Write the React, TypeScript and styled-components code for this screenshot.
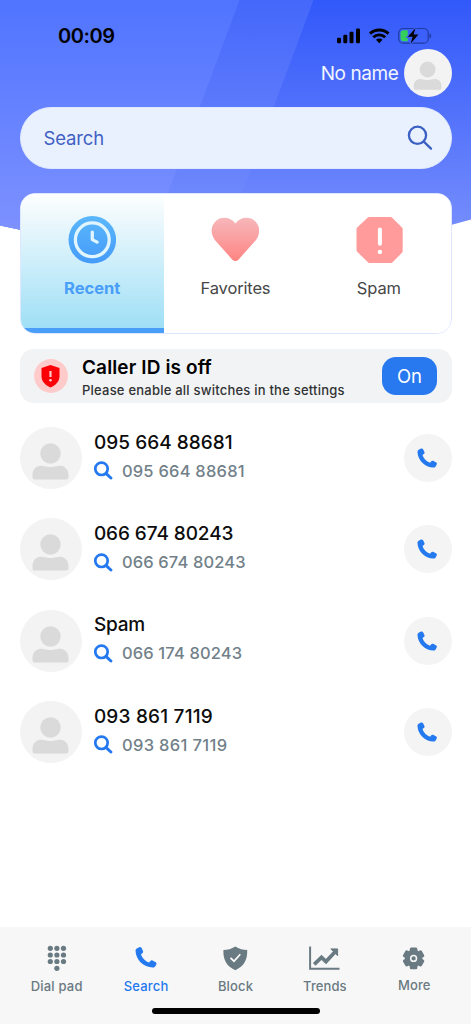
import React from 'react';
import styled, { createGlobalStyle } from 'styled-components';

const GlobalStyle = createGlobalStyle`
  * { box-sizing: border-box; }
  body { margin: 0; background: #fff; font-family: Inter, "Liberation Sans", sans-serif; }
  button { font: inherit; border: 0; padding: 0; background: none; }
  svg { display: block; flex: none; }
`;

const Screen = styled.div`
  position: relative;
  width: 471px;
  height: 1024px;
  overflow: hidden;
  display: flex;
  flex-direction: column;
`;

const Backdrop = styled.svg`
  position: absolute;
  top: 0;
  left: 0;
  z-index: -1;
`;

const Text = styled.span<{ $size: number; $color: string; $weight?: number; $track?: number }>`
  font-size: ${p => p.$size}px;
  line-height: 24px;
  font-weight: ${p => p.$weight ?? 400};
  letter-spacing: ${p => p.$track ?? 0}px;
  color: ${p => p.$color};
  white-space: nowrap;
`;

const StatusBar = styled.div`
  height: 48px;
  padding: 24px 39px 0 58px;
  display: flex;
  justify-content: space-between;
  align-items: flex-start;
`;

const StatusIcons = styled.div`
  display: flex;
  align-items: center;
  height: 23px;
`;

const Profile = styled.div`
  height: 49px;
  padding-right: 19.5px;
  display: flex;
  align-items: center;
  justify-content: flex-end;
  gap: 5px;
  & > span { padding-top: 2px; }
`;

const AvatarCircle = styled.div<{ $size: number }>`
  width: ${p => p.$size}px;
  height: ${p => p.$size}px;
  border-radius: 50%;
  background: #f3f3f3;
  flex: none;
`;

const SearchField = styled.div`
  margin: 9.5px 19.5px 0;
  height: 62px;
  border-radius: 31px;
  padding: 0 18px 0 23px;
  border: 1px solid #dfe8ff;
  background: #eaf1fe;
  display: flex;
  align-items: center;
  justify-content: space-between;
`;

const Tabs = styled.div`
  margin: 24px 19.5px 0;
  height: 141.5px;
  border-radius: 15px;
  border: 1px solid #dfe6ff;
  background: #fff;
  overflow: hidden;
  display: grid;
  grid-template-columns: repeat(3, 1fr);
`;

const Tab = styled.button<{ $active?: boolean }>`
  display: flex;
  flex-direction: column;
  align-items: center;
  gap: 11px;
  padding-top: 22px;
  background: ${p => (p.$active ? 'linear-gradient(#fefefe, #9fdff6)' : '#fff')};
  border-bottom: ${p => (p.$active ? '5px solid #489ef9' : '0')};
`;

const Notice = styled.div`
  margin: 15px 19.5px 0;
  height: 54px;
  border-radius: 14px;
  background: #f2f3f5;
  display: flex;
  align-items: center;
  padding: 0 14.5px 0 14px;
`;

const NoticeText = styled.div`
  display: flex;
  flex-direction: column;
  padding: 6px 0 0 14.5px;
  flex: 1;
  & > span { line-height: 22px; }
`;

const OnButton = styled.button`
  width: 55px;
  height: 38px;
  border-radius: 14px;
  background: #2878f0;
`;

const CallList = styled.div`
  padding: 24px 19.5px 0;
  display: flex;
  flex-direction: column;
  gap: 29.3px;
  flex: 1;
`;

const CallRow = styled.div`
  height: 62px;
  display: flex;
  align-items: center;
`;

const CallInfo = styled.div`
  display: flex;
  flex-direction: column;
  gap: 4px;
  padding: 0 0 2.5px 12.4px;
  flex: 1;
`;

const NumberLine = styled.div`
  display: flex;
  align-items: center;
  gap: 9px;
`;

const CallButton = styled.button`
  width: 48px;
  height: 48px;
  border-radius: 50%;
  background: #f4f4f4;
  display: flex;
  align-items: center;
  justify-content: center;
  padding-right: 2px;
`;

const BottomNav = styled.nav`
  height: 97px;
  background: #f7f7f7;
  padding: 15px 12px 0;
  display: flex;
  flex-direction: column;
`;

const NavItems = styled.div`
  display: grid;
  grid-template-columns: repeat(5, 1fr);
  height: 66px;
`;

const NavItem = styled.button<{ $raised?: boolean }>`
  display: flex;
  flex-direction: column;
  align-items: center;
  justify-content: flex-start;
  & > svg { margin-bottom: ${p => (p.$raised ? -1 : 0)}px; }
`;

const HomeIndicator = styled.div`
  width: 168px;
  height: 6px;
  border-radius: 3px;
  background: #000;
  align-self: center;
`;

const Avatar = ({ size }: { size: number }) => (
  <AvatarCircle $size={size}>
    <svg width={size} height={size} viewBox="0 0 62 62">
      <circle cx="30.500" cy="26.500" r="10.200" fill="#dadada" />
      <path d="M12.500 50.500v-2.500C12.500 43 15.500 39 20.500 38.700c4 0 5 1.200 10 1.200s6-1.200 10-1.200c5 .3 8 4.300 8 9.300v2.500a2 2 0 0 1-2 2h-32a2 2 0 0 1-2-2z" fill="#dadada" />
    </svg>
  </AvatarCircle>
);

const PHONE = 'M2.500 1.800 4.800.7C5.800.3 6.800.6 7.300 1.600L8.900 4.900c.4 1 .1 1.800-.7 2.400L6.600 8.500C7.800 12.500 11.300 16.300 15.700 17.700L17.100 16c.6-.8 1.500-1 2.300-.6l3.700 1.900c.8.5 1 1.400.6 2.200l-1 2c-.6 1.200-1.600 1.800-3 1.800C9.500 23.200.8 14.500.6 4.700.6 3.300 1.200 2.400 2.500 1.800z';

const PhoneIcon = () => (
  <svg width="20" height="20" viewBox="0 0 24 24"><path d={PHONE} fill="#2479ee" /></svg>
);

const ContactSearchIcon = () => (
  <svg width="19" height="19" viewBox="0 0 19 19" fill="none" stroke="#2479f0">
    <circle cx="7.500" cy="7.800" r="6.200" strokeWidth="2.700" />
    <path d="m12.200 12.600 4.700 4.400" strokeWidth="3" strokeLinecap="round" />
  </svg>
);

const StatusGlyphs = () => (
  <svg width="96" height="20" viewBox="0 0 96 20">
    <rect x="1" y="11.800" width="4" height="5.500" rx="1.200" />
    <rect x="7.300" y="8.800" width="4" height="8.500" rx="1.200" />
    <rect x="13.500" y="5.800" width="4" height="11.500" rx="1.200" />
    <rect x="20" y="2.500" width="4" height="14.800" rx="1.200" />
    <g fill="none" stroke="#000" strokeWidth="2.900">
      <path d="M34 7.600c5.200-4.900 13.300-4.900 18.500 0" />
      <path d="M37.300 11.300c3.400-3.300 8.500-3.300 11.900 0" />
    </g>
    <path d="M40 13.800c1.800-1.600 4.700-1.600 6.500 0L43.200 17.300z" />
    <rect x="62.700" y="2.500" width="29.500" height="14.700" rx="4.500" fill="none" stroke="#203b9f" strokeWidth="1.200" />
    <path d="M93.500 7.300v5.200c2.200-1 2.200-4.200 0-5.200z" fill="#203b9f" />
    <path d="M67.500 4.300h4.300v11h-4.300a3 3 0 0 1-3-3V7.300a3 3 0 0 1 3-3z" fill="#34ce5d" />
    <path d="M79.600 1.900 71.800 10.800h4.800l-2 7 7.800-9.300h-4.800z" stroke="#3c60f9" strokeWidth="2.200" paintOrder="stroke" />
  </svg>
);

const ClockIcon = () => (
  <svg width="48" height="49" viewBox="0 0 48 49">
    <defs>
      <linearGradient id="clock" x2="0" y2="1"><stop stopColor="#5bb7fb" /><stop offset="1" stopColor="#449bf9" /></linearGradient>
    </defs>
    <circle cx="24.300" cy="23.800" r="23.800" fill="url(#clock)" />
    <circle cx="24.300" cy="23.800" r="16.900" fill="none" stroke="#e1f5fe" strokeWidth="3.300" />
    <path d="M24.300 16.100v7.500l4.900 2.500" fill="none" stroke="#e1f5fe" strokeWidth="3.300" strokeLinecap="round" strokeLinejoin="round" />
  </svg>
);

const HeartIcon = () => (
  <svg width="48" height="49" viewBox="0 0 48 49">
    <defs>
      <linearGradient id="heart" x2="0" y2="1"><stop stopColor="#f7b7ba" /><stop offset="1" stopColor="#fe8583" /></linearGradient>
    </defs>
    <path transform="translate(.4 -.6)" d="M24 8.200C19.500 1.500 10 .5 4.500 5.500-1 10.500-1 18.500 3.400 24.500L20.300 43.500c2.400 2.700 5 2.700 7.400 0L44.600 24.500C49 18.500 49 10.500 43.500 5.500 38 .5 28.500 1.500 24 8.200z" fill="url(#heart)" />
  </svg>
);

const SpamIcon = () => (
  <svg width="48" height="49" viewBox="0 0 48 49">
    <path transform="translate(1.200 -.5) scale(.985)" d="M13.200 1.500h21.600c.7 0 1.200.2 1.700.7l10 10c.5.500.7 1 .7 1.700v22.200c0 .7-.2 1.200-.7 1.700l-9.800 9.800c-.5.500-1 .7-1.700.7H12.700L1 36.800c-.5-.5-.7-1-.7-1.700V13.900c0-.7.2-1.200.7-1.700l10.500-10c.5-.5 1-.7 1.700-.7z" fill="#ff9b9a" />
    <path d="M24.900 13.500v14.300" stroke="#fff" strokeWidth="4" strokeLinecap="round" />
    <circle cx="24.900" cy="35.900" r="2.200" fill="#fff" />
  </svg>
);

const NoticeIcon = () => (
  <svg width="34" height="34" viewBox="0 0 34 34">
    <circle cx="17" cy="17" r="16.900" fill="#ffcaca" />
    <path d="M16.500 5.900 25.500 9v8.300c0 5.200-3.600 8.700-9 11.200-5.400-2.500-9-6-9-11.200V9z" fill="#fb0007" />
    <path d="M16.500 12v6" stroke="#ffcaca" strokeWidth="2.200" />
    <circle cx="16.500" cy="21.300" r="1.300" fill="#ffcaca" />
  </svg>
);

const GREY = '#6a7a82';

const DialIcon = () => (
  <svg width="32" height="32" viewBox="0 0 32 32" fill={GREY}>
    {[6.300, 13, 19.500].map(y => [9.300, 15.900, 22.500].map(x => <circle key={`${x}-${y}`} cx={x} cy={y} r="2.600" />))}
    <circle cx="15.900" cy="26.300" r="2.600" />
  </svg>
);

const NavPhoneIcon = () => (
  <svg width="32" height="32" viewBox="0 0 32 32">
    <path d={PHONE} transform="translate(5 4.600) scale(.9)" fill="#2479ee" />
  </svg>
);

const ShieldIcon = () => (
  <svg width="32" height="32" viewBox="0 0 32 32">
    <path d="M16.300 4.500c3.800 2.500 7.800 3.400 11.900 3.600C28.600 17.700 25.100 24.500 16.300 28.200 7.500 24.500 4 17.700 4.400 8.100 8.500 7.900 12.500 7 16.300 4.500z" fill={GREY} />
    <path d="m11.500 15.800 3.500 3.400 6.300-7" stroke="#fff" strokeWidth="1.700" fill="none" />
  </svg>
);

const TrendsIcon = () => (
  <svg width="32" height="32" viewBox="0 0 32 32" fill="none" stroke={GREY}>
    <path d="M1.100 4.500v22.200H30.500" strokeWidth="2" />
    <path d="m5.200 22.300 7.300-7 4.500 4.300 8.500-9" strokeWidth="3.700" />
    <path d="M21.800 6.900h6.800v6.800z" fill={GREY} strokeWidth="1" />
  </svg>
);

const GearIcon = () => (
  <svg width="32" height="32" viewBox="0 0 32 32">
    <g fill={GREY} transform="translate(15.600 16.400)">
      {[0, 60, 120].map(a => <rect key={a} x="-3.800" y="-10.800" width="7.600" height="21.600" rx="1.500" transform={`rotate(${a})`} />)}
      <circle r="8.800" />
    </g>
    <circle cx="15.600" cy="16.400" r="2.900" fill="none" stroke="#f7f7f7" strokeWidth="1.500" />
  </svg>
);

const calls = [
  { title: '095 664 88681', number: '095 664 88681', track: 0.05, sub: 0.22 },
  { title: '066 674 80243', number: '066 674 80243', track: -0.08, sub: 0.14 },
  { title: 'Spam', number: '066 174 80243', track: -0.2, sub: 0.14 },
  { title: '093 861 7119', number: '093 861 7119', track: 0.2, sub: 0.35 },
];

export default function App() {
  return (
    <Screen>
      <GlobalStyle />
      <Backdrop width="471" height="260" viewBox="0 0 471 260">
        <defs>
          <linearGradient id="sky" gradientUnits="userSpaceOnUse" x1="0" y1="0" x2="0" y2="230"><stop stopColor="#3158fa" /><stop offset="1" stopColor="#758dfc" /></linearGradient>
          <linearGradient id="mid" gradientUnits="userSpaceOnUse" x1="0" y1="0" x2="0" y2="230"><stop stopColor="#4568fb" /><stop offset="1" stopColor="#758dfc" /></linearGradient>
          <linearGradient id="light" gradientUnits="userSpaceOnUse" x1="0" y1="0" x2="0" y2="230"><stop stopColor="#5074ff" /><stop offset="1" stopColor="#7d91ff" /></linearGradient>
          <clipPath id="edge"><path d="M0 0H471V219.500L451 225Q240 270 19 229.500L0 225.500z" /></clipPath>
        </defs>
        <g clipPath="url(#edge)">
          <path d="M0 0H471V260H0z" fill="url(#sky)" />
          <path d="M0 0H313.500L217 260H0z" fill="url(#mid)" />
          <path d="M0 0H239.500L143 260H0z" fill="url(#light)" />
        </g>
      </Backdrop>

      <StatusBar>
        <Text $size={20} $weight={600} $track={-0.4} $color="#000">00:09</Text>
        <StatusIcons><StatusGlyphs /></StatusIcons>
      </StatusBar>
      <Profile>
        <Text $size={19} $track={-0.4} $color="#f3f6ff">No name</Text>
        <Avatar size={48} />
      </Profile>

      <SearchField>
        <Text $size={18.500} $track={-0.15} $color="#4060c4">Search</Text>
        <svg width="26" height="26" viewBox="0 0 26 26" fill="none" stroke="#3b60c3" strokeWidth="2.300" strokeLinecap="round">
          <circle cx="10.500" cy="10.300" r="8.600" /><path d="m16.800 16.600 7.200 7" />
        </svg>
      </SearchField>

      <Tabs>
        <Tab $active><ClockIcon /><Text $size={16.500} $weight={700} $color="#489ef9">Recent</Text></Tab>
        <Tab><HeartIcon /><Text $size={16.500} $track={-0.15} $color="#474747">Favorites</Text></Tab>
        <Tab><SpamIcon /><Text $size={16.500} $track={-0.15} $color="#474747">Spam</Text></Tab>
      </Tabs>

      <Notice>
        <NoticeIcon />
        <NoticeText>
          <Text $size={19} $weight={600} $track={0.12} $color="#000">Caller ID is off</Text>
          <Text $size={13} $weight={500} $track={0.22} $color="#303234">Please enable all switches in the settings</Text>
        </NoticeText>
        <OnButton><Text $size={18.500} $color="#fff">On</Text></OnButton>
      </Notice>

      <CallList>
        {calls.map(c => (
          <CallRow key={c.title}>
            <Avatar size={62} />
            <CallInfo>
              <Text $size={19} $track={c.track} $weight={500} $color="#0c0c0c">{c.title}</Text>
              <NumberLine>
                <ContactSearchIcon />
                <Text $size={16.500} $track={c.sub} $weight={500} $color="#728189">{c.number}</Text>
              </NumberLine>
            </CallInfo>
            <CallButton><PhoneIcon /></CallButton>
          </CallRow>
        ))}
      </CallList>

      <BottomNav>
        <NavItems>
          <NavItem><DialIcon /><Text $size={13} $track={0.2} $weight={500} $color={GREY}>Dial pad</Text></NavItem>
          <NavItem><NavPhoneIcon /><Text $size={13} $track={0.15} $weight={500} $color="#2479ee">Search</Text></NavItem>
          <NavItem><ShieldIcon /><Text $size={13} $track={0.15} $weight={500} $color={GREY}>Block</Text></NavItem>
          <NavItem><TrendsIcon /><Text $size={13} $track={0.1} $weight={500} $color={GREY}>Trends</Text></NavItem>
          <NavItem $raised><GearIcon /><Text $size={13} $track={0.1} $weight={500} $color={GREY}>More</Text></NavItem>
        </NavItems>
        <HomeIndicator />
      </BottomNav>
    </Screen>
  );
}
